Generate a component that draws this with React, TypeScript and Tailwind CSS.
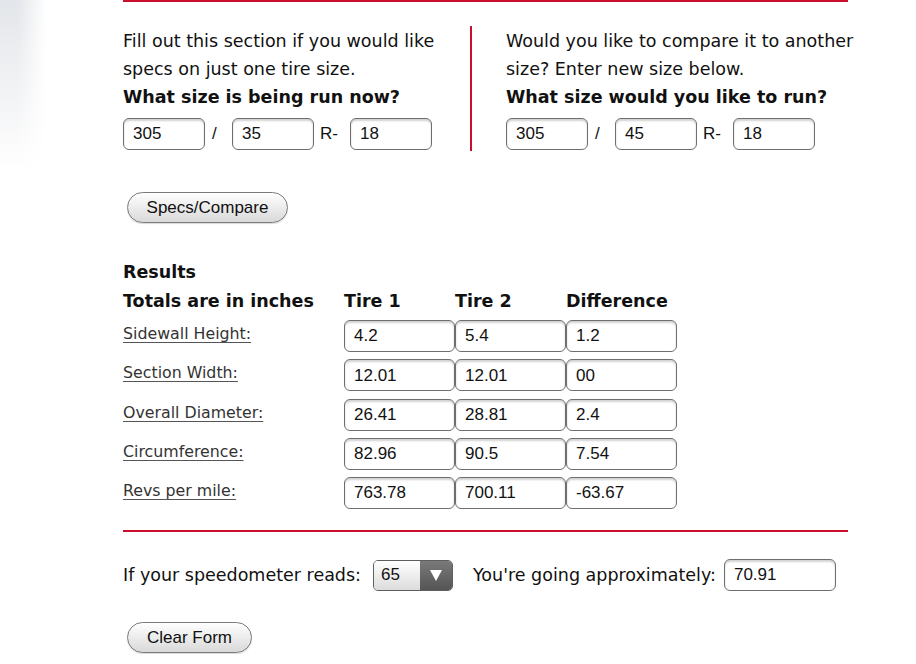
import React from 'react';

const verdana = { fontFamily: '"DejaVu Sans", Verdana, sans-serif' };

const Field = ({ value, w = 'w-[82px]' }: { value: string; w?: string }) => (
  <div
    className={`${w} h-[32px] rounded-[6px] border border-[#6e6e6e] bg-white pl-[9px] flex items-center text-[17px] text-[#111] font-['Liberation_Sans',Arial,sans-serif] shadow-[inset_0_2px_2px_rgba(0,0,0,0.18)]`}
  >
    {value}
  </div>
);

const SizeRow = ({ a, b, c }: { a: string; b: string; c: string }) => (
  <div className="flex items-center mt-[7px] text-[17px] text-[#111] font-['Liberation_Sans',Arial,sans-serif]">
    <Field value={a} />
    <span className="w-[27px] pl-[7px]">/</span>
    <Field value={b} />
    <span className="w-[36px] pl-[6px]">R-</span>
    <Field value={c} />
  </div>
);

const PillButton = ({ label, w }: { label: string; w: string }) => (
  <button
    className={`${w} h-[31px] ml-[4px] rounded-full border border-[#7a7a7a] bg-gradient-to-b from-white to-[#d9d9d9] text-[17px] text-[#111] font-['Liberation_Sans',Arial,sans-serif] shadow-[0_1px_1px_rgba(0,0,0,0.15)]`}
  >
    {label}
  </button>
);

const results = [
  { label: 'Sidewall Height:', t1: '4.2', t2: '5.4', diff: '1.2' },
  { label: 'Section Width:', t1: '12.01', t2: '12.01', diff: '00' },
  { label: 'Overall Diameter:', t1: '26.41', t2: '28.81', diff: '2.4' },
  { label: 'Circumference:', t1: '82.96', t2: '90.5', diff: '7.54' },
  { label: 'Revs per mile:', t1: '763.78', t2: '700.11', diff: '-63.67' },
];

export default function App() {
  return (
    <div className="relative w-[916px] h-[664px] overflow-hidden bg-white text-[#111]" style={verdana}>
      {/* faded page background at the left edge */}
      <div className="absolute top-0 left-0 w-[46px] h-[170px] bg-gradient-to-b from-[#e3e6ea] via-[#f1f2f4] to-white [mask-image:linear-gradient(to_right,black_40%,transparent)]" />

      <div className="relative pl-[123px]">
        <div className="w-[725px] h-[2px] bg-[#c8102e]" />

        <div className="flex mt-[24px] h-[125px]">
          <div className="w-[347px] flex-none pt-[1px]">
            <p className="text-[17.5px] leading-[28px]">
              Fill out this section if you would like
              <br />
              specs on just one tire size.
            </p>
            <p className="text-[17.5px] leading-[28px] font-bold">What size is being run now?</p>
            <SizeRow a="305" b="35" c="18" />
          </div>
          <div className="w-[2px] flex-none bg-[#c8102e]" />
          <div className="pl-[34px] pt-[1px] flex-none whitespace-nowrap">
            <p className="text-[17.5px] leading-[28px]">
              Would you like to compare it to another
              <br />
              size? Enter new size below.
            </p>
            <p className="text-[17.5px] leading-[28px] font-bold">What size would you like to run?</p>
            <SizeRow a="305" b="45" c="18" />
          </div>
        </div>

        <div className="mt-[41px]">
          <PillButton label="Specs/Compare" w="w-[161px]" />
        </div>

        <p className="mt-[35px] text-[17.5px] leading-[28px] font-bold">Results</p>
        <div className="flex text-[17.5px] leading-[30px] font-bold">
          <span className="w-[221px]">Totals are in inches</span>
          <span className="w-[111px]">Tire 1</span>
          <span className="w-[111px]">Tire 2</span>
          <span>Difference</span>
        </div>

        <div className="mt-[4px] flex flex-col gap-[7.25px]">
          {results.map((r) => (
            <div key={r.label} className="flex items-start">
              <span className="w-[221px] text-[15.8px] leading-[28px] text-[#333] underline underline-offset-[3px] decoration-[#555]">
                {r.label}
              </span>
              <Field value={r.t1} w="w-[111px]" />
              <Field value={r.t2} w="w-[111px]" />
              <Field value={r.diff} w="w-[111px]" />
            </div>
          ))}
        </div>

        <div className="mt-[21px] w-[725px] h-[2px] bg-[#c8102e]" />

        <div className="mt-[27px] flex items-center text-[17.5px]">
          <span>If your speedometer reads:</span>
          <div className="ml-[12px] flex h-[31px] w-[80px] rounded-[5px] border border-[#5e5e5e] overflow-hidden text-[17px] font-['Liberation_Sans',Arial,sans-serif]">
            <div className="flex-1 flex items-center pl-[7px] bg-gradient-to-b from-white to-[#dcdcdc]">65</div>
            <div className="w-[32px] flex items-center justify-center bg-gradient-to-b from-[#7a7a7a] to-[#555]">
              <svg width="14" height="13" viewBox="0 0 14 13">
                <path d="M1 1 L13 1 L7 12 Z" fill="#fff" />
              </svg>
            </div>
          </div>
          <span className="ml-[20px]">You're going approximately:</span>
          <div className="ml-[8px]">
            <Field value="70.91" w="w-[112px]" />
          </div>
        </div>

        <div className="mt-[31px]">
          <PillButton label="Clear Form" w="w-[125px]" />
        </div>
      </div>
    </div>
  );
}
